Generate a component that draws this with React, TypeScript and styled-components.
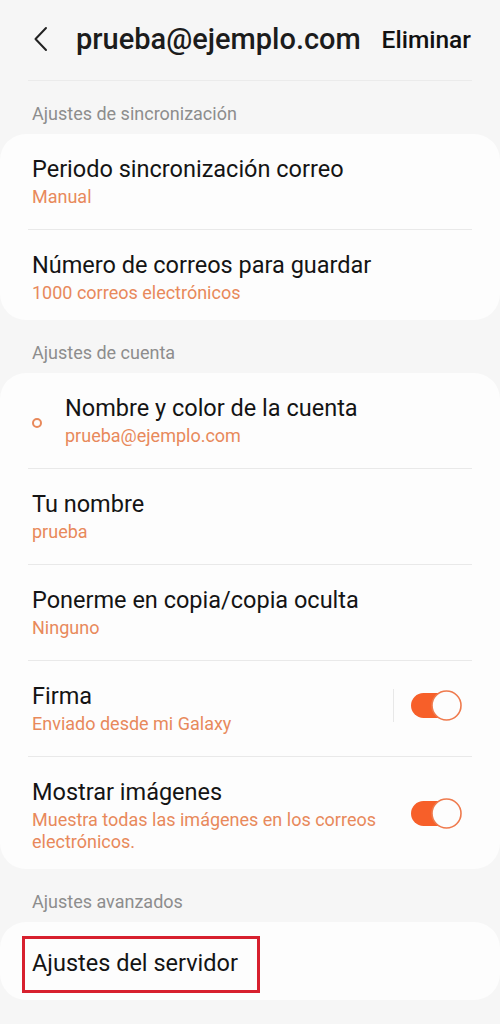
import React from 'react';
import styled, { createGlobalStyle } from 'styled-components';

const GlobalStyle = createGlobalStyle`
  html, body {
    margin: 0;
    padding: 0;
    background: #f6f6f6;
  }
  body {
    font-family: Roboto, "Noto Sans", "Liberation Sans", sans-serif;
    -webkit-font-smoothing: antialiased;
  }
  * {
    box-sizing: border-box;
  }
`;

const Page = styled.div`
  width: 500px;
  min-height: 1024px;
  background: #f6f6f6;
`;

const Header = styled.header`
  height: 80px;
  display: flex;
  align-items: center;
  padding: 0 29px 2px 32px;
`;

const BackButton = styled.button`
  border: none;
  background: none;
  padding: 0;
  width: 18px;
  height: 26px;
  display: flex;
  align-items: center;
  justify-content: center;
  color: #222;
  cursor: pointer;
`;

const HeaderTitle = styled.h1`
  flex: 1;
  margin: 0 0 0 26px;
  font-size: 29px;
  font-weight: 500;
  color: #1c1c1c;
`;

const HeaderAction = styled.button`
  border: none;
  background: none;
  padding: 0;
  font-family: inherit;
  font-size: 24.5px;
  font-weight: 500;
  color: #111;
`;

const HeaderRule = styled.div`
  height: 1px;
  margin: 0 28px;
  background: #ebebeb;
`;

const SectionLabel = styled.div`
  padding: 23px 32px 10px;
  font-size: 18px;
  line-height: 20px;
  color: #8d8d8d;
`;

const Card = styled.div`
  background: #fdfdfd;
  border-radius: 26px;
  padding: 0 28px;
`;

const Row = styled.div<{ $single?: boolean }>`
  position: relative;
  display: flex;
  align-items: center;
  padding: ${p => (p.$single ? '27px 0 23px 4px' : '21px 0 21px 4px')};
  border-bottom: 1px solid #e9e9e9;

  &:last-child {
    border-bottom: none;
    padding-bottom: ${p => (p.$single ? '23px' : '16px')};
  }
`;

const RowText = styled.div`
  flex: 1;
  min-width: 0;
`;

const Title = styled.div`
  font-size: 23.5px;
  line-height: 28px;
  color: #141414;
`;

const Subtitle = styled.div`
  margin-top: 3px;
  font-size: 18px;
  line-height: 22px;
  color: #e8895b;
  padding-right: 10px;
`;

const ColorDot = styled.span`
  width: 10px;
  height: 10px;
  border: 2px solid #e8895b;
  border-radius: 50%;
  margin: 4px 23px 0 0;
  flex-shrink: 0;
`;

const SwitchArea = styled.div<{ $divided?: boolean }>`
  display: flex;
  align-items: center;
  margin-right: 10px;
  margin-top: ${p => (p.$divided ? '-6px' : '-4px')};
`;

const VerticalRule = styled.span`
  width: 1px;
  height: 33px;
  background: #e8e8e8;
  margin-right: 17px;
`;

const Highlight = styled.span`
  position: absolute;
  left: -6px;
  top: 14px;
  width: 238px;
  height: 57px;
  border: 3px solid #d7202e;
  pointer-events: none;
`;

const Toggle: React.FC = () => (
  <svg width="51" height="31" viewBox="0 0 51 31">
    <rect x="0" y="3" width="46" height="25" rx="12.5" fill="#f75f29" />
    <circle cx="35.5" cy="15.5" r="14.5" fill="#fdfdfd" stroke="#ef7a4d" strokeWidth="1.6" />
  </svg>
);

const Chevron: React.FC = () => (
  <svg width="16" height="26" viewBox="0 0 16 26" fill="none">
    <path d="M13 2 L2.5 13 L13 24" stroke="#222" strokeWidth="2" strokeLinecap="round" strokeLinejoin="round" />
  </svg>
);

interface SettingRowProps {
  title: string;
  subtitle?: string;
  dot?: boolean;
  toggle?: boolean;
  divided?: boolean;
}

const SettingRow: React.FC<SettingRowProps> = ({ title, subtitle, dot, toggle, divided }) => (
  <Row>
    {dot && <ColorDot />}
    <RowText>
      <Title>{title}</Title>
      {subtitle && <Subtitle>{subtitle}</Subtitle>}
    </RowText>
    {toggle && (
      <SwitchArea $divided={divided}>
        {divided && <VerticalRule />}
        <Toggle />
      </SwitchArea>
    )}
  </Row>
);

export default function App() {
  return (
    <Page>
      <GlobalStyle />
      <Header>
        <BackButton aria-label="Atrás">
          <Chevron />
        </BackButton>
        <HeaderTitle>prueba@ejemplo.com</HeaderTitle>
        <HeaderAction>Eliminar</HeaderAction>
      </Header>
      <HeaderRule />

      <SectionLabel>Ajustes de sincronización</SectionLabel>
      <Card>
        <SettingRow title="Periodo sincronización correo" subtitle="Manual" />
        <SettingRow title="Número de correos para guardar" subtitle="1000 correos electrónicos" />
      </Card>

      <SectionLabel>Ajustes de cuenta</SectionLabel>
      <Card>
        <SettingRow dot title="Nombre y color de la cuenta" subtitle="prueba@ejemplo.com" />
        <SettingRow title="Tu nombre" subtitle="prueba" />
        <SettingRow title="Ponerme en copia/copia oculta" subtitle="Ninguno" />
        <SettingRow toggle divided title="Firma" subtitle="Enviado desde mi Galaxy" />
        <SettingRow
          toggle
          title="Mostrar imágenes"
          subtitle="Muestra todas las imágenes en los correos electrónicos."
        />
      </Card>

      <SectionLabel>Ajustes avanzados</SectionLabel>
      <Card>
        <Row $single>
          <RowText>
            <Title>Ajustes del servidor</Title>
          </RowText>
          <Highlight />
        </Row>
      </Card>
    </Page>
  );
}
